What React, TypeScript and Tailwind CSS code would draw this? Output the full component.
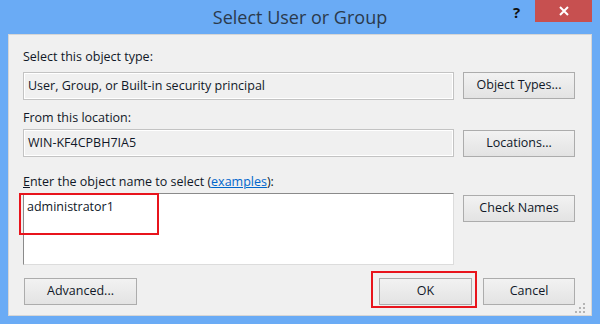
import React from 'react';

const font = { fontFamily: '"Open Sans", "Noto Sans", Arial, sans-serif' };

function Btn({ children, className = '' }: { children: React.ReactNode; className?: string }) {
  return (
    <div
      className={`flex h-[27px] items-center justify-center border border-[#acacac] bg-gradient-to-b from-[#f2f2f2] to-[#e3e3e3] text-[12.5px] text-[#101828] ${className}`}
    >
      {children}
    </div>
  );
}

function ReadBox({ value }: { value: string }) {
  return (
    <div className="flex h-[28px] w-[431px] items-center border border-[#c3c3c3] bg-[#f0f0f0] pl-[4px] text-[12.5px] text-[#101828] shadow-[inset_1px_1px_0_#ffffff,inset_-1px_-1px_0_#ffffff]">
      {value}
    </div>
  );
}

export default function App() {
  return (
    <div className="flex h-[324px] w-[600px] flex-col bg-[#6aabf5]" style={font}>
      {/* title bar */}
      <div className="relative flex h-[34px] items-center justify-center">
        <span className="text-[18px] text-[#2a3a4c]">Select User or Group</span>
        <span className="absolute left-[513px] top-[1px] text-[15px] font-bold text-[#111]">?</span>
        <div className="absolute left-[535px] top-0 flex h-[22px] w-[57px] items-center justify-center bg-[#c75050]">
          <svg width="10" height="10" viewBox="0 0 10 10">
            <path d="M1 1 L9 9 M9 1 L1 9" stroke="#fff" strokeWidth="2" />
          </svg>
        </div>
      </div>

      {/* panel */}
      <div className="relative ml-[8px] h-[282px] w-[584px] border border-[#d6d6d6] bg-[#f0f0f0] pl-[14px] pr-[16px] text-[12.5px] text-[#101828]">
        <div className="mt-[14px] h-[16px] leading-[16px]">Select this object type:</div>
        <div className="mt-[7px] flex items-start gap-[9px]">
          <ReadBox value="User, Group, or Built-in security principal" />
          <Btn className="w-[112px]">Object Types...</Btn>
        </div>

        <div className="mt-[10px] h-[16px] leading-[16px]">From this location:</div>
        <div className="mt-[3px] flex items-start gap-[9px]">
          <ReadBox value="WIN-KF4CPBH7IA5" />
          <Btn className="mt-[1px] w-[112px]">Locations...</Btn>
        </div>

        <div className="mt-[17px] h-[16px] leading-[16px]">
          <span className="underline">E</span>nter the object name to select (
          <span className="text-[#0066cc] underline">examples</span>):
        </div>
        <div className="mt-[3px] flex items-start gap-[9px]">
          <div className="relative h-[72px] w-[431px] border border-[#8a8a8a] border-b-[#dcdcdc] border-r-[#dcdcdc] bg-white pl-[3px] pt-[5px] leading-[16px]">
            administrator1
            <div className="absolute left-[-5px] top-[-1px] h-[42px] w-[140px] border-2 border-[#e8141c]" />
          </div>
          <Btn className="mt-[2px] w-[112px]">Check Names</Btn>
        </div>

        <div className="mt-[13px] flex items-start">
          <Btn className="ml-[1px] h-[26px] w-[113px]">Advanced...</Btn>
          <div className="relative ml-[242px]">
            <Btn className="h-[26px] w-[93px]">OK</Btn>
            <div className="absolute left-[-8px] top-[-7px] h-[37px] w-[106px] border-2 border-[#e8141c]" />
          </div>
          <Btn className="ml-[11px] h-[26px] w-[92px]">Cancel</Btn>
        </div>

        <svg className="absolute bottom-[2px] right-[6px]" width="10" height="10" viewBox="0 0 10 10">
          <g fill="#b4b4b4">
            <rect x="8" y="0" width="2" height="2" />
            <rect x="4" y="4" width="2" height="2" />
            <rect x="8" y="4" width="2" height="2" />
            <rect x="0" y="8" width="2" height="2" />
            <rect x="4" y="8" width="2" height="2" />
            <rect x="8" y="8" width="2" height="2" />
          </g>
        </svg>
      </div>
    </div>
  );
}
